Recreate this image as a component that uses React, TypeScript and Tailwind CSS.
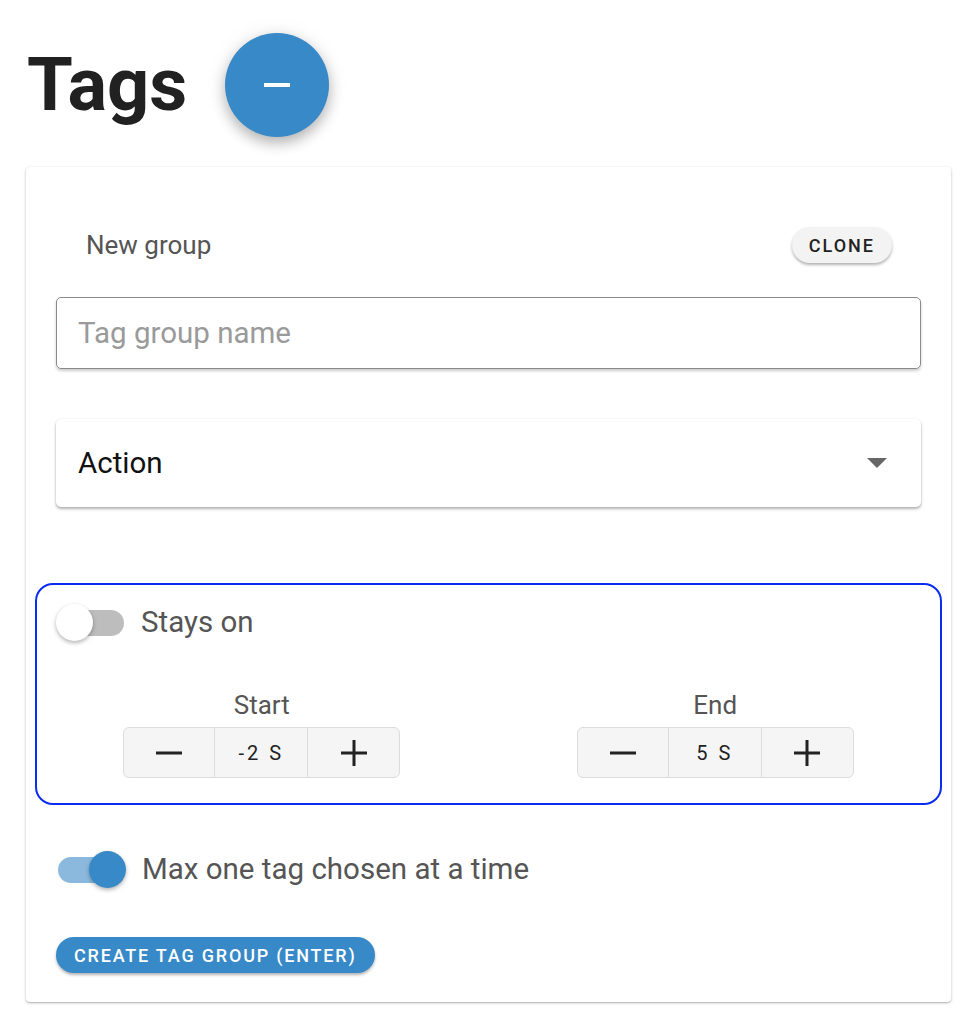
import { useState } from 'react';

const font = { fontFamily: 'Roboto, "Noto Sans", sans-serif' };

function Toggle({ on, onChange }: { on: boolean; onChange: () => void }) {
  return (
    <button type="button" onClick={onChange} className="relative w-[70px] h-[38px] shrink-0">
      <span
        className={`absolute left-[1px] top-[6px] w-[67px] h-[26px] rounded-full ${on ? 'bg-[#8bb9de]' : 'bg-[#bdbdbd]'}`}
      />
      <span
        className={`absolute top-0 w-[37px] h-[37px] rounded-full shadow-[0_2px_4px_rgba(0,0,0,0.3)] ${
          on ? 'left-[32px] bg-[#3889c7]' : 'left-0 bg-white'
        }`}
      />
    </button>
  );
}

function Stepper({ label, value }: { label: string; value: string }) {
  return (
    <div className="flex flex-col items-center">
      <div className="text-[26px] leading-[30px] text-[#555] mb-[7px]">{label}</div>
      <div className="flex h-[51px] rounded-[6px] border border-[#dcdcdc] bg-[#f5f5f5] overflow-hidden">
        <button type="button" className="w-[91px] flex items-center justify-center border-r border-[#dcdcdc]">
          <svg width="28" height="28" viewBox="0 0 28 28">
            <rect x="1" y="12.5" width="26" height="3" fill="#222" />
          </svg>
        </button>
        <div className="w-[93px] flex items-center justify-center border-r border-[#dcdcdc] text-[20px] tracking-[3px] text-[#222]">
          {value}
        </div>
        <button type="button" className="w-[91px] flex items-center justify-center">
          <svg width="28" height="28" viewBox="0 0 28 28">
            <rect x="1" y="12.5" width="26" height="3" fill="#222" />
            <rect x="12.5" y="1" width="3" height="26" fill="#222" />
          </svg>
        </button>
      </div>
    </div>
  );
}

export default function App() {
  const [staysOn, setStaysOn] = useState(false);
  const [maxOne, setMaxOne] = useState(true);

  return (
    <div className="min-h-screen bg-white pl-[26px] pr-[29px] pt-[33px]" style={font}>
      {/* Header */}
      <div className="flex items-center h-[104px]">
        <h1 className="text-[74px] font-bold text-[#212121] leading-none ml-[1px]">Tags</h1>
        <button
          type="button"
          className="ml-[38px] w-[104px] h-[104px] rounded-full bg-[#3889c7] flex items-center justify-center shadow-[0_6px_14px_rgba(0,0,0,0.28),0_0_24px_rgba(0,0,0,0.06)]"
        >
          <span className="block w-[26px] h-[4px] bg-white" />
        </button>
      </div>

      {/* Card */}
      <div className="mt-[30px] bg-white rounded-[4px] shadow-[0_1px_3px_rgba(0,0,0,0.25),0_1px_1px_rgba(0,0,0,0.1)] px-[30px] pt-[60px] pb-[29px]">
        <div className="flex items-center justify-between pl-[30px] pr-[29px] h-[36px]">
          <span className="text-[26px] leading-none text-[#555]">New group</span>
          <button
            type="button"
            className="h-[36px] px-[17px] rounded-full bg-[#f3f3f3] shadow-[0_2px_3px_rgba(0,0,0,0.3)] text-[18px] font-medium tracking-[2px] text-[#222]"
          >
            CLONE
          </button>
        </div>

        <input
          placeholder="Tag group name"
          className="mt-[34px] block w-full h-[72px] rounded-[5px] border-[1.5px] border-[#8a8a8a] px-[21px] text-[29.5px] text-[#333] placeholder:text-[#9a9a9a] shadow-[0_2px_3px_rgba(0,0,0,0.2)] outline-none"
        />

        <div className="mt-[50px] h-[88px] rounded-[5px] bg-white shadow-[0_2px_3px_rgba(0,0,0,0.3),0_0_2px_rgba(0,0,0,0.08)] flex items-center justify-between pl-[22px] pr-[34px]">
          <span className="text-[29.5px] text-[#111]">Action</span>
          <svg width="20" height="10" viewBox="0 0 20 10">
            <path d="M0 0 L20 0 L10 10 Z" fill="#666" />
          </svg>
        </div>

        {/* Stays on box */}
        <div className="mt-[76px] -mx-[21px] border-2 border-[#0b2cf2] rounded-[18px] pt-[19px] pb-[25px]">
          <div className="flex items-center gap-[15px] pl-[19px] h-[38px]">
            <Toggle on={staysOn} onChange={() => setStaysOn(!staysOn)} />
            <span className="text-[29.5px] leading-none text-[#555]">Stays on</span>
          </div>
          <div className="grid grid-cols-2 gap-[4px] mt-[48px]">
            <Stepper label="Start" value="-2 S" />
            <Stepper label="End" value="5 S" />
          </div>
        </div>

        <div className="mt-[46px] flex items-center gap-[15px] pl-[1px] h-[38px]">
          <Toggle on={maxOne} onChange={() => setMaxOne(!maxOne)} />
          <span className="text-[29.5px] leading-none text-[#555]">Max one tag chosen at a time</span>
        </div>

        <button
          type="button"
          className="mt-[48px] h-[36px] px-[18px] rounded-full bg-[#3889c7] text-white text-[18px] font-medium tracking-[1.8px] shadow-[0_2px_3px_rgba(0,0,0,0.3)]"
        >
          CREATE TAG GROUP (ENTER)
        </button>
      </div>
    </div>
  );
}
